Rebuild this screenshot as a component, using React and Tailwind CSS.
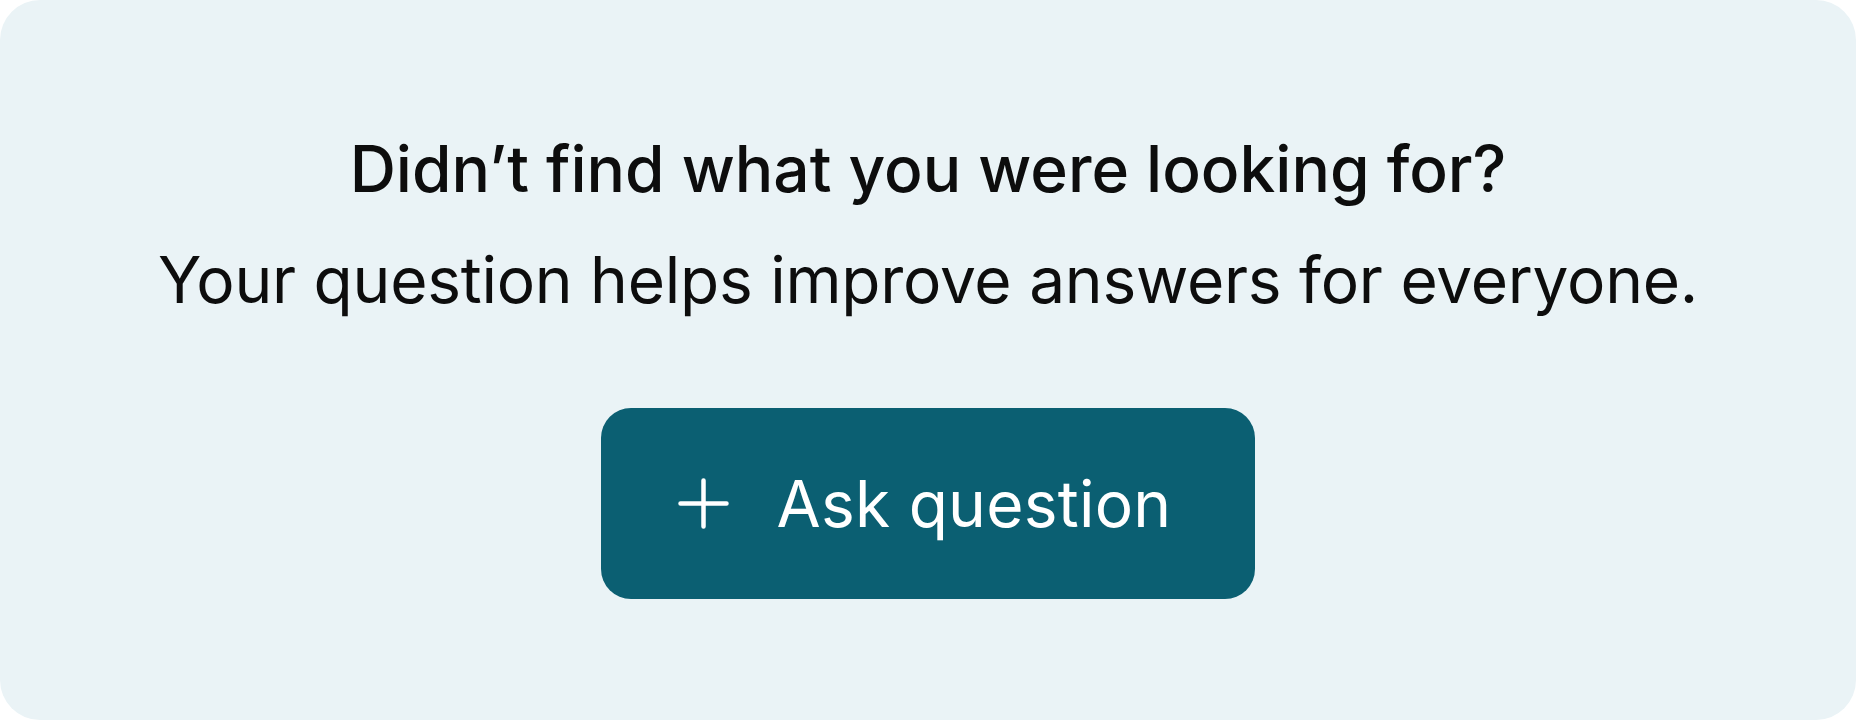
import React from "react";

export default function App() {
  return (
    <div className="w-[1856px] h-[720px] bg-white">
      <div
        className="w-[1856px] h-[720px] rounded-[40px] bg-[#EAF3F6] flex flex-col items-center pt-[130px]"
        style={{ fontFamily: "Inter, 'Noto Sans', sans-serif" }}
      >
        <h1 className="text-[64px] leading-[77px] font-medium text-[#0d0d0d]">
          Didn’t find what you were looking for?
        </h1>
        <p className="mt-[34px] text-[64px] leading-[77px] font-normal tracking-[-0.25px] text-[#0d0d0d]">
          Your question helps improve answers for everyone.
        </p>
        <button className="mt-[90px] h-[191px] rounded-[30px] bg-[#0B5F72] flex items-center pl-[77px] pr-[84px] gap-[48px] text-white">
          <svg width="51" height="51" viewBox="0 0 51 51" fill="none">
            <path
              d="M2.5 25.5H48.5M25.5 2.5V48.5"
              stroke="white"
              strokeWidth="4.5"
              strokeLinecap="round"
            />
          </svg>
          <span className="text-[64px] leading-[77px] font-normal tracking-[0.25px]">Ask question</span>
        </button>
      </div>
    </div>
  );
}
